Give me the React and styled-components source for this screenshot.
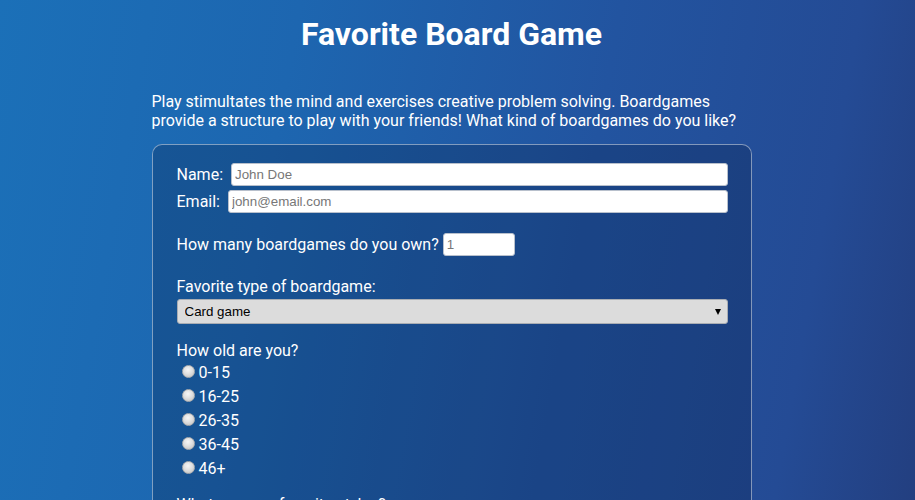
import React from "react";
import styled, { createGlobalStyle } from "styled-components";

const GlobalStyle = createGlobalStyle`
  html, body {
    margin: 0;
    padding: 0;
  }
  body {
    min-height: 100vh;
    padding-right: 12px;
    font-family: Roboto, "Liberation Sans", sans-serif;
    color: #fff;
    background: linear-gradient(100deg, #1b70b8 0%, #1d66b0 30%, #2254a0 62%, #244b95 86%, #233f80 100%);
    background-attachment: fixed;
  }
`;

const Page = styled.div`
  width: 600px;
  margin: 0 auto;
  padding-bottom: 40px;
`;

const Title = styled.h1`
  font-size: 32px;
  font-weight: 700;
  text-align: center;
  margin: 15px 0 0;
`;

const Intro = styled.p`
  font-size: 16px;
  margin: 39px 0 0;
`;

const Card = styled.form`
  margin-top: 14px;
  padding: 18px 23px 30px 24px;
  border: 1px solid rgba(200, 210, 225, 0.6);
  border-radius: 10px;
  background: rgba(5, 20, 55, 0.24);
  font-size: 16px;
`;

const FieldRow = styled.label`
  display: flex;
  align-items: center;
  gap: 8px;
  & + & {
    margin-top: 4px;
  }
`;

const TextInput = styled.input`
  flex: 1;
  height: 23px;
  box-sizing: border-box;
  border: 1px solid #b8c0cc;
  border-radius: 3px;
  padding: 1px 3px;
  font-family: "Liberation Sans", Arial, sans-serif;
  font-size: 13.33px;
  background: #fff;
  &::placeholder {
    color: #777;
  }
`;

const NumberInput = styled(TextInput)`
  flex: none;
  width: 72px;
`;

const Question = styled.div`
  margin-top: ${(p) => p.$gap || 17}px;
  line-height: 19px;
`;

const InlineQuestion = styled.label`
  display: flex;
  align-items: center;
  gap: 4px;
  margin-top: 20px;
`;

const SelectWrap = styled.div`
  position: relative;
  margin-top: 3px;
  &::after {
    content: "";
    position: absolute;
    right: 7px;
    top: 10px;
    border-left: 3.5px solid transparent;
    border-right: 3.5px solid transparent;
    border-top: 6px solid #000;
    pointer-events: none;
  }
`;

const Select = styled.select`
  appearance: none;
  display: block;
  width: 100%;
  height: 25px;
  box-sizing: border-box;
  border: 1px solid #a9adb3;
  border-radius: 3px;
  background: #dcdcdc;
  padding: 0 7px;
  font-family: "Liberation Sans", Arial, sans-serif;
  font-size: 13.33px;
  color: #000;
`;

const RadioList = styled.div`
  display: flex;
  flex-direction: column;
`;

const RadioRow = styled.label`
  display: flex;
  align-items: center;
  height: 24px;
`;

const Radio = styled.input.attrs({ type: "radio" })`
  appearance: none;
  width: 13px;
  height: 13px;
  margin: 0 4px 2px 5px;
  border-radius: 50%;
  border: 1px solid #b0b0b0;
  background: radial-gradient(circle at 45% 35%, #f6f6f6 0%, #e0e0e0 45%, #bdbdbd 100%);
  box-sizing: border-box;
`;

const ages = ["0-15", "16-25", "26-35", "36-45", "46+"];

export default function App() {
  return (
    <>
      <GlobalStyle />
      <Page>
        <Title>Favorite Board Game</Title>
        <Intro>
          Play stimultates the mind and exercises creative problem solving. Boardgames
          provide a structure to play with your friends! What kind of boardgames do you like?
        </Intro>
        <Card>
          <FieldRow>
            Name:
            <TextInput type="text" placeholder="John Doe" />
          </FieldRow>
          <FieldRow>
            Email:
            <TextInput type="email" placeholder="john@email.com" />
          </FieldRow>
          <InlineQuestion>
            How many boardgames do you own?
            <NumberInput type="number" placeholder="1" />
          </InlineQuestion>
          <Question $gap={21}>Favorite type of boardgame:</Question>
          <SelectWrap>
            <Select defaultValue="card">
              <option value="card">Card game</option>
              <option value="strategy">Strategy game</option>
              <option value="party">Party game</option>
            </Select>
          </SelectWrap>
          <Question>How old are you?</Question>
          <RadioList>
            {ages.map((a) => (
              <RadioRow key={a}>
                <Radio name="age" value={a} />
                {a}
              </RadioRow>
            ))}
          </RadioList>
          <Question $gap={15}>What are your favorite styles?</Question>
        </Card>
      </Page>
    </>
  );
}
